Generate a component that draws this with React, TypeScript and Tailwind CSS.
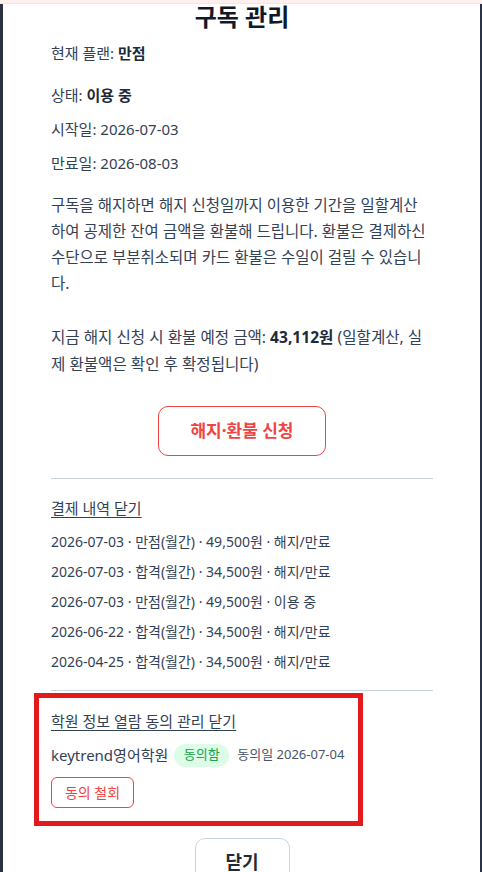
import React from 'react';

const history = [
  { date: '2026-07-03', plan: '만점(월간)', price: '49,500원', status: '해지/만료' },
  { date: '2026-07-03', plan: '합격(월간)', price: '34,500원', status: '해지/만료' },
  { date: '2026-07-03', plan: '만점(월간)', price: '49,500원', status: '이용 중' },
  { date: '2026-06-22', plan: '합격(월간)', price: '34,500원', status: '해지/만료' },
  { date: '2026-04-25', plan: '합격(월간)', price: '34,500원', status: '해지/만료' },
];

export default function App() {
  return (
    <div
      className="w-[482px] h-[872px] overflow-hidden flex flex-col bg-[#2b3244]"
      style={{ fontFamily: '"Noto Sans", "Noto Sans CJK KR", sans-serif' }}
    >
      <div className="h-[4px] bg-[#fdf0ee] border-b border-[#fbe3df]" />
      <div className="flex flex-1 min-h-0">
        <div className="w-[3px] bg-[#2b3244]" />
        <div className="flex-1 bg-white overflow-hidden">
          <div className="ml-[48px] w-[382px] flex flex-col text-[#334155]">
            <h2 className="text-[24px] leading-[26px] font-bold text-center text-[#111827]">구독 관리</h2>

            <p className="mt-[11px] text-[15px] leading-[24px]">
              현재 플랜: <b className="text-[#1f2937]">만점</b>
            </p>
            <p className="mt-[18px] text-[15px] leading-[24px]">
              상태: <b className="text-[#1f2937]">이용 중</b>
            </p>
            <p className="mt-[10px] text-[15px] leading-[24px]">시작일: 2026-07-03</p>
            <p className="mt-[10px] text-[15px] leading-[24px]">만료일: 2026-08-03</p>

            <p className="mt-[17px] text-[15.5px] leading-[26px] whitespace-nowrap">
              구독을 해지하면 해지 신청일까지 이용한 기간을 일할계산
              <br />
              하여 공제한 잔여 금액을 환불해 드립니다. 환불은 결제하신
              <br />
              수단으로 부분취소되며 카드 환불은 수일이 걸릴 수 있습니
              <br />
              다.
            </p>

            <p className="mt-[28px] text-[15.6px] leading-[27px]">
              지금 해지 신청 시 환불 예정 금액: <b className="text-[#1f2937]">43,112원</b> (일할계산, 실제 환불액은 확인 후 확정됩니다)
            </p>

            <button className="mt-[28px] self-center w-[168px] h-[50px] rounded-[10px] border border-[#ef4444] text-[#ef4444] text-[17px] font-bold bg-white">
              해지·환불 신청
            </button>

            <div className="mt-[22px] border-t border-[#cbd5e1]" />

            <a className="mt-[17px] self-start text-[15px] leading-[24px] underline underline-offset-[3px]">결제 내역 닫기</a>

            <ul className="mt-[7px] flex flex-col">
              {history.map((h, i) => (
                <li key={i} className="text-[14px] leading-[30px] text-[#334155]">
                  {h.date} · {h.plan} · {h.price} · {h.status}
                </li>
              ))}
            </ul>

            <div className="mt-[13px] border-t border-[#cbd5e1]" />

            <div className="mt-[2px] -ml-[17px] w-[329px] border-[5px] border-[#e3191c] pl-[12px] pt-[11px] pb-[13px] flex flex-col items-start">
              <a className="text-[15px] leading-[24px] underline underline-offset-[3px]">학원 정보 열람 동의 관리 닫기</a>
              <div className="mt-[10px] h-[24px] flex items-center">
                <span className="text-[15px] text-[#334155]">keytrend영어학원</span>
                <span className="ml-[6px] h-[23px] w-[55px] rounded-full bg-[#dcfce7] text-[#16a34a] text-[13px] flex items-center justify-center">
                  동의함
                </span>
                <span className="ml-[8px] text-[13px] text-[#475569]">동의일 2026-07-04</span>
              </div>
              <button className="mt-[10px] h-[31px] w-[83px] rounded-[6px] border border-[#ef4444] text-[#ef4444] text-[14px] bg-white">
                동의 철회
              </button>
            </div>

            <button className="mt-[12px] self-center w-[95px] h-[48px] rounded-[10px] border border-[#cbd5e1] bg-white text-[18px] font-bold text-[#1f2937]">
              닫기
            </button>
          </div>
        </div>
        <div className="w-[2px] bg-[#2b3244]" />
      </div>
    </div>
  );
}
